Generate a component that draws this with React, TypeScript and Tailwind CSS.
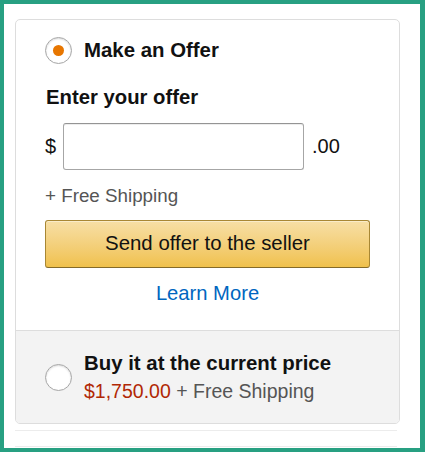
import React from "react";

const font = { fontFamily: '"Liberation Sans", Arial, sans-serif' };

function Radio({ checked }: { checked?: boolean }) {
  return (
    <div className="w-[27px] h-[27px] shrink-0 rounded-full border-[1.5px] border-[#a6a6a6] bg-white shadow-[inset_0_1px_2px_rgba(0,0,0,0.15)] flex items-center justify-center">
      {checked && <div className="w-[11px] h-[11px] rounded-full bg-[#e77600]" />}
    </div>
  );
}

export default function App() {
  return (
    <div
      style={font}
      className="w-[425px] h-[452px] bg-white border-t-4 border-l-4 border-b-4 border-r-[5px] border-[#28a082] overflow-hidden text-[#111] text-[19.5px] leading-[28.5px]"
    >
      <div className="ml-[11px] mt-[15px] w-[385px] rounded-[5px] border border-[#dddddd] overflow-hidden">
        <div className="pt-[16px] pb-[23px] px-[29px]">
          <div className="flex items-center gap-[12px]">
            <Radio checked />
            <span className="font-bold text-[20.4px]">Make an Offer</span>
          </div>
          <div className="mt-[18px] font-bold text-[20.3px] ml-[1px]">Enter your offer</div>
          <div className="mt-[12px] flex items-center">
            <span className="w-[18px] text-[20px]">$</span>
            <div className="w-[241px] h-[47px] rounded-[3px] border border-[#a6a6a6] border-t-[#949494] shadow-[inset_0_1px_0_rgba(0,0,0,0.07)] bg-white" />
            <span className="ml-[8px] text-[20px]">.00</span>
          </div>
          <div className="mt-[12px] text-[#555] text-[18.8px]">+ Free Shipping</div>
          <button className="mt-[9px] w-full h-[48px] rounded-[3px] border border-[#a88734] border-b-[#846a29] bg-gradient-to-b from-[#f7dfa5] to-[#f0c14b] shadow-[inset_0_1px_0_rgba(255,255,255,0.4)] text-[#111] text-[20.4px]">
            Send offer to the seller
          </button>
          <div className="mt-[11px] text-center text-[#0066c0] text-[20.2px]">Learn More</div>
        </div>
        <div className="border-t border-[#dddddd] bg-[#f3f3f3] h-[93px] px-[29px] flex items-center gap-[12px]">
          <Radio />
          <div>
            <div className="font-bold text-[20.4px]">Buy it at the current price</div>
            <div>
              <span className="text-[#b12704]">$1,750.00</span>
              <span className="text-[#555]"> + Free Shipping</span>
            </div>
          </div>
        </div>
      </div>
      <div className="ml-[11px] mt-[6px] w-[382px] h-[17px] border-t border-b border-[#ececec]" />
    </div>
  );
}
